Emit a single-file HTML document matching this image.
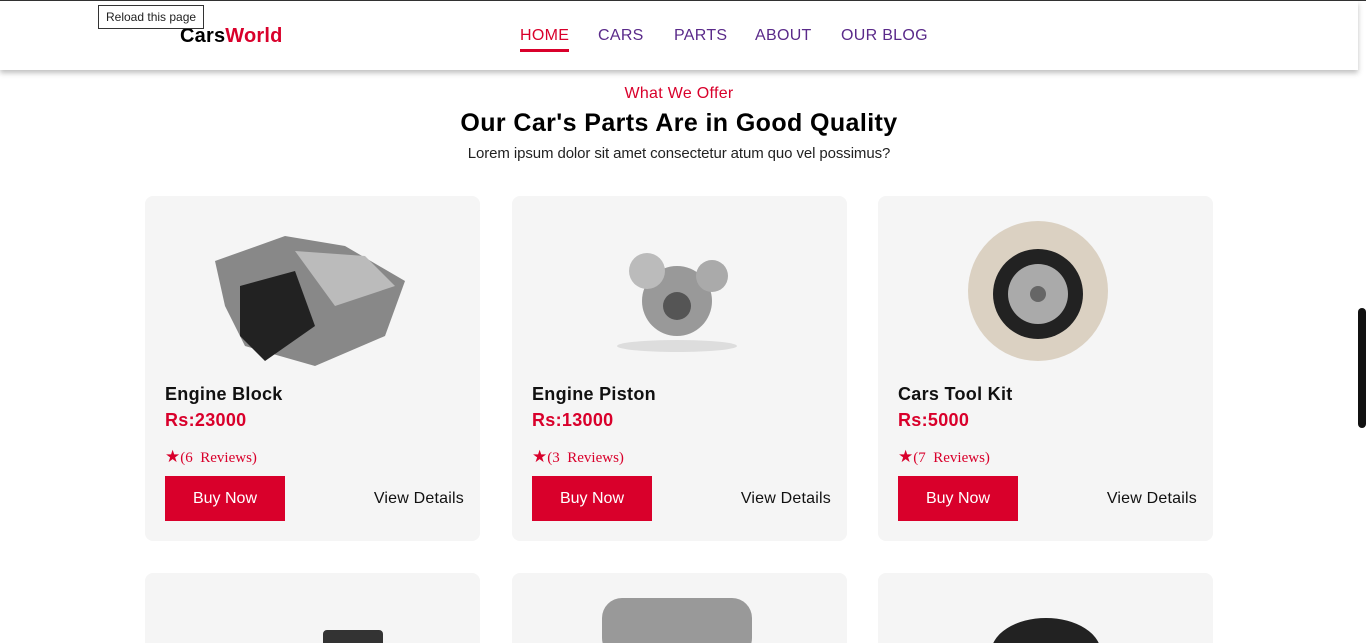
<!DOCTYPE html>
<html style="height:643px;overflow:hidden"><head><meta charset="utf-8"><style>
*{margin:0;padding:0;box-sizing:border-box}
body{width:1366px;height:643px;overflow:hidden;background:#fff;font-family:"Liberation Sans",sans-serif;position:relative}
.top{position:absolute;left:0;top:0;width:1366px;height:1px;background:#333}
header{position:absolute;left:0;top:1px;width:1358px;height:69px;background:#fff;box-shadow:0 3px 5px rgba(0,0,0,.25);z-index:2}
.logo{position:absolute;left:180px;top:24px;font-weight:bold;font-size:20px;letter-spacing:.2px}
.logo span{color:#d9002b}
.tip{position:absolute;left:98px;top:5px;border:1px solid #333;background:#fff;font-size:12px;padding:4px 7px;color:#222;z-index:3}
nav a{position:absolute;top:26px;font-size:16px;color:#5a2a8a;text-decoration:none;letter-spacing:.3px}
nav a.h{color:#d9002b;border-bottom:3px solid #d9002b;padding-bottom:4px}
.sub{position:absolute;top:85px;width:1358px;text-align:center;color:#d9002b;font-size:16px;letter-spacing:.3px}
h1{position:absolute;top:109px;width:1358px;text-align:center;font-size:25px;color:#000;letter-spacing:.4px}
.p{position:absolute;top:145px;width:1358px;text-align:center;font-size:15px;color:#222;letter-spacing:-.1px}
.card{position:absolute;width:335px;height:345px;background:#f5f5f5;border-radius:8px;overflow:hidden}
.card.b{height:70px;border-radius:8px 8px 0 0}
.card .img{position:absolute;left:0;width:100%;top:20px;height:160px}
.t{position:absolute;left:20px;top:188px;font-size:18px;font-weight:bold;color:#111;letter-spacing:.3px}
.pr{position:absolute;left:20px;top:214px;font-size:18px;font-weight:bold;color:#d9002b;letter-spacing:.3px}
.rv{position:absolute;left:20px;top:251px;font-family:"Liberation Serif",serif;font-size:15px;color:#d9002b}
.rv b{font-size:17px;font-family:"DejaVu Sans",sans-serif}
.bn{position:absolute;left:20px;top:280px;width:120px;height:45px;background:#d9002b;color:#fff;font-size:16px;text-align:center;line-height:45px}
.vd{position:absolute;right:16px;top:294px;font-size:16px;color:#111;letter-spacing:.2px}
.sb{position:absolute;left:1358px;top:308px;width:8px;height:120px;background:#111;border-radius:4px}
</style></head><body>
<div class="top"></div>
<header>
<div class="logo">Cars<span>World</span></div>
<nav><a class="h" style="left:520px">HOME</a><a style="left:598px">CARS</a><a style="left:674px">PARTS</a><a style="left:755px">ABOUT</a><a style="left:841px">OUR BLOG</a></nav>
</header>
<div class="tip">Reload this page</div>
<div class="sub">What We Offer</div>
<h1>Our Car's Parts Are in Good Quality</h1>
<div class="p">Lorem ipsum dolor sit amet consectetur atum quo vel possimus?</div>

<div class="card" style="left:145px;top:196px">
<svg class="img" viewBox="0 0 335 160"><polygon points="70,45 140,20 200,30 260,65 240,120 170,150 100,130 80,90" fill="#888"/><polygon points="95,70 150,55 170,110 120,145 95,120" fill="#222"/><polygon points="150,35 220,40 250,70 190,90" fill="#bbb"/></svg>
<div class="t">Engine Block</div><div class="pr">Rs:23000</div>
<div class="rv"><b>★</b>(6&nbsp; Reviews)</div><div class="bn">Buy Now</div><div class="vd">View Details</div></div>

<div class="card" style="left:512px;top:196px">
<svg class="img" viewBox="0 0 335 160"><ellipse cx="165" cy="130" rx="60" ry="6" fill="#ddd"/><circle cx="165" cy="85" r="35" fill="#999"/><circle cx="135" cy="55" r="18" fill="#bbb"/><circle cx="200" cy="60" r="16" fill="#aaa"/><circle cx="165" cy="90" r="14" fill="#555"/></svg>
<div class="t">Engine Piston</div><div class="pr">Rs:13000</div>
<div class="rv"><b>★</b>(3&nbsp; Reviews)</div><div class="bn">Buy Now</div><div class="vd">View Details</div></div>

<div class="card" style="left:878px;top:196px">
<svg class="img" viewBox="0 0 335 160"><circle cx="160" cy="75" r="70" fill="#c9b9a0" opacity=".6"/><circle cx="160" cy="78" r="45" fill="#222"/><circle cx="160" cy="78" r="30" fill="#aaa"/><circle cx="160" cy="78" r="8" fill="#666"/></svg>
<div class="t">Cars Tool Kit</div><div class="pr">Rs:5000</div>
<div class="rv"><b>★</b>(7&nbsp; Reviews)</div><div class="bn">Buy Now</div><div class="vd">View Details</div></div>

<div class="card b" style="left:145px;top:573px"><svg class="img" viewBox="0 0 335 160"><rect x="178" y="37" width="60" height="20" rx="4" fill="#333"/></svg></div>
<div class="card b" style="left:512px;top:573px"><svg class="img" viewBox="0 0 335 160"><rect x="90" y="5" width="150" height="60" rx="20" fill="#999"/></svg></div>
<div class="card b" style="left:878px;top:573px"><svg class="img" viewBox="0 0 335 160"><ellipse cx="168" cy="60" rx="55" ry="35" fill="#222"/></svg></div>
<div class="sb"></div>
</body></html>
